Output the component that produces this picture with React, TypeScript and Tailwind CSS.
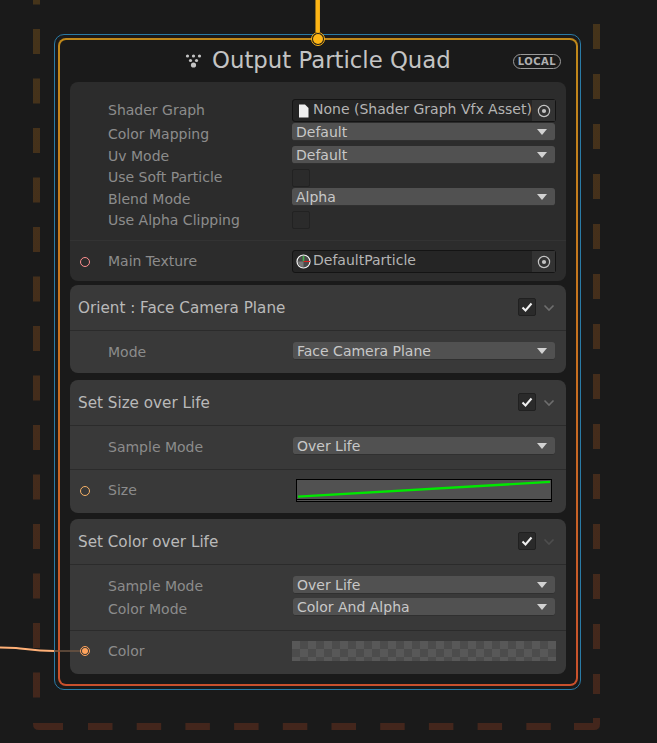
import React from "react";

const labelText = "text-[14px] leading-[18px] text-[#8c8c8c]";

function Caret() {
  return <span className="h-0 w-0 border-x-[5px] border-t-[6px] border-x-transparent border-t-[#d2d2d2]" />;
}

function Dropdown({ value, className = "" }: { value: string; className?: string }) {
  return (
    <div className={`flex h-[18px] items-center justify-between rounded-[3px] border-b border-[#303030] bg-[#515151] pl-[4px] pr-[8px] text-[14px] leading-[18px] text-[#c8c8c8] ${className}`}>
      <span>{value}</span>
      <Caret />
    </div>
  );
}

function Target() {
  return (
    <div className="flex h-full w-[23px] items-center justify-center bg-[#333333]">
      <svg width="14" height="14" viewBox="0 0 14 14">
        <circle cx="7" cy="7" r="5.6" fill="none" stroke="#c4c4c4" strokeWidth="1.2" />
        <circle cx="7" cy="7" r="2.1" fill="#c4c4c4" />
      </svg>
    </div>
  );
}

function ObjectField({ icon, value }: { icon: React.ReactNode; value: string }) {
  return (
    <div className="flex h-[23px] w-[264px] items-center rounded-[3px] border border-[#141414] bg-[#252525] text-[14px] text-[#b4b4b4]">
      <div className="flex w-[20px] shrink-0 justify-center">{icon}</div>
      <span className="flex-1 whitespace-nowrap pb-[2px]">{value}</span>
      <Target />
    </div>
  );
}

function CheckBox({ checked, className = "" }: { checked?: boolean; className?: string }) {
  return (
    <div className={`flex h-[18px] w-[18px] items-center justify-center rounded-[2px] ${checked ? "border border-[#202020] bg-[#2a2a2a]" : "border border-[#222222] bg-[#2b2b2b]"} ${className}`}>
      {checked && (
        <svg width="12" height="10" viewBox="0 0 12 10">
          <path d="M1.5 5.5 L4.5 8.5 L10.5 1.5" fill="none" stroke="#f0f0f0" strokeWidth="2" />
        </svg>
      )}
    </div>
  );
}

function Row({ label, children, className = "", labelClass = "" }: { label: string; children: React.ReactNode; className?: string; labelClass?: string }) {
  return (
    <div className={`flex items-center ${className}`}>
      <span className={`w-[222px] shrink-0 pl-[38px] ${labelText} ${labelClass}`}>{label}</span>
      {children}
    </div>
  );
}

function Port({ color, filled }: { color: string; filled?: boolean }) {
  return (
    <span className="absolute left-[10px] top-1/2 flex h-[10px] w-[10px] -translate-y-1/2 items-center justify-center rounded-full border" style={{ borderColor: color }}>
      {filled && <span className="h-[6px] w-[6px] rounded-full" style={{ backgroundColor: color }} />}
    </span>
  );
}

function BlockHeader({ title, dimChevron }: { title: string; dimChevron?: boolean }) {
  return (
    <div className="flex h-[46px] items-center border-b border-[#2b2b2b] pl-[8px] pr-[11px]">
      <span className="flex-1 translate-y-[1px] text-[15.2px] text-[#b9b9b9]">{title}</span>
      <CheckBox checked className="-translate-y-[1px]" />
      <svg className="ml-[7px]" width="12" height="8" viewBox="0 0 12 8">
        <path d="M1.5 1.5 L6 6 L10.5 1.5" fill="none" stroke={dimChevron ? "#4e4e4e" : "#6e6e6e"} strokeWidth="1.6" />
      </svg>
    </div>
  );
}

const blockClass = "overflow-hidden rounded-[8px] bg-[#393939]";

export default function App() {
  return (
    <div className="relative h-[743px] w-[657px] overflow-hidden bg-[#1a1a1a] pl-[54px] pt-[34px] font-['DejaVu_Sans',sans-serif]">
      {/* group frame */}
      <svg className="absolute left-0 top-0" width="657" height="743" fill="none" strokeWidth="7">
        <defs>
          <linearGradient id="frame" x1="0" y1="0" x2="0" y2="743" gradientUnits="userSpaceOnUse">
            <stop offset="0" stopColor="#45341a" />
            <stop offset="1" stopColor="#43261c" />
          </linearGradient>
        </defs>
        <path d="M36.5 -20.5 V698" stroke="url(#frame)" strokeDasharray="25 24.5" />
        <path d="M596.5 24 V694" stroke="url(#frame)" strokeDasharray="25 25" />
        <path d="M36.5 723 V724 Q36.5 726.5 39 726.5 H63" stroke="#43261c" />
        <path d="M88 726.5 H560" stroke="#43261c" strokeDasharray="24.5 24.2" />
        <path d="M574 726.5 H594 Q596.5 726.5 596.5 724 V718" stroke="#43261c" />
      </svg>

      <div className="relative h-[656px] w-[527px] rounded-[10px] border border-[#2a7ba6] pb-[3px] pl-[3px] pr-[2px] pt-[3px]">
        <div className="h-full rounded-[8px] bg-gradient-to-b from-[#c0891a] via-[#c8701f] to-[#c9502c] p-[2px]">
          <div className="h-full rounded-[6px] bg-[#1a1a1a] px-[10px] pt-[42px]">
            <div className="flex flex-col">
              {/* context settings */}
              <div className="h-[199px] overflow-hidden rounded-[8px] bg-[#2c2c2c] pt-[17px]">
                <Row label="Shader Graph" labelClass="-translate-y-[1px]">
                  <ObjectField
                    value="None (Shader Graph Vfx Asset)"
                    icon={
                      <svg width="11" height="14" viewBox="0 0 11 14">
                        <path d="M1 0.5 H7 L10.5 4 V13.5 H1 Z" fill="#f0f0f0" />
                      </svg>
                    }
                  />
                </Row>
                <Row label="Color Mapping" className="mt-[1px]" labelClass="translate-y-[2px]">
                  <Dropdown value="Default" className="w-[263px]" />
                </Row>
                <Row label="Uv Mode" className="mt-[5px]" labelClass="translate-y-[1px]">
                  <Dropdown value="Default" className="w-[263px]" />
                </Row>
                <Row label="Use Soft Particle" className="mt-[5px]" labelClass="-translate-y-[1px]">
                  <CheckBox />
                </Row>
                <Row label="Blend Mode" className="mt-[1px]" labelClass="translate-y-[2px]">
                  <Dropdown value="Alpha" className="w-[263px]" />
                </Row>
                <Row label="Use Alpha Clipping" className="mt-[5px]">
                  <CheckBox />
                </Row>
                <div className="relative mt-[11px] flex h-[42px] items-center border-t border-[#333333]">
                  <Port color="#ff8f8f" />
                  <Row label="Main Texture" labelClass="-translate-y-[1px]">
                    <ObjectField
                      value="DefaultParticle"
                      icon={
                        <svg width="15" height="15" viewBox="0 0 15 15">
                          <circle cx="7.5" cy="7.5" r="6.5" fill="#4a4a4a" stroke="#f4f4f4" strokeWidth="1.2" />
                          <path d="M7.5 7.5 V13 A5.5 5.5 0 0 1 2 7.5 Z" fill="#777777" />
                          <path d="M7.5 7.5 V2" stroke="#45b04a" strokeWidth="1.6" />
                          <path d="M7.5 7.5 H14" stroke="#e02020" strokeWidth="1" />
                        </svg>
                      }
                    />
                  </Row>
                </div>
              </div>

              {/* orient */}
              <div className={`mt-[4px] h-[88px] ${blockClass}`}>
                <BlockHeader title="Orient : Face Camera Plane" />
                <Row label="Mode" className="mt-[11px]" labelClass="translate-y-[1px]">
                  <Dropdown value="Face Camera Plane" className="ml-[1px] w-[262px]" />
                </Row>
              </div>

              {/* size over life */}
              <div className={`mt-[7px] h-[133px] ${blockClass}`}>
                <BlockHeader title="Set Size over Life" />
                <Row label="Sample Mode" className="mt-[11px]" labelClass="translate-y-[1px]">
                  <Dropdown value="Over Life" className="ml-[1px] w-[262px]" />
                </Row>
                <div className="relative mt-[14px] flex h-[42px] items-center border-t border-[#2b2b2b]">
                  <Port color="#f7b267" />
                  <Row label="Size" labelClass="-translate-y-[1px]">
                    <div className="ml-[4px] h-[23px] w-[256px] border border-black bg-[#515151]">
                      <svg width="254" height="20" viewBox="0 0 254 20" preserveAspectRatio="none" className="border-b border-black">
                        <path d="M1 17.5 L253 2" stroke="#00e800" strokeWidth="2.5" fill="none" />
                      </svg>
                    </div>
                  </Row>
                </div>
              </div>

              {/* color over life */}
              <div className={`mt-[6px] h-[155px] ${blockClass}`}>
                <BlockHeader title="Set Color over Life" dimChevron />
                <Row label="Sample Mode" className="mt-[11px]" labelClass="translate-y-[1px]">
                  <Dropdown value="Over Life" className="ml-[1px] w-[262px]" />
                </Row>
                <Row label="Color Mode" className="mt-[4px]" labelClass="translate-y-[2px]">
                  <Dropdown value="Color And Alpha" className="ml-[1px] w-[262px]" />
                </Row>
                <div className="relative mt-[14px] flex h-[41px] items-center border-t border-[#2b2b2b]">
                  <Port color="#ffa35c" filled />
                  <Row label="Color">
                    <div className="h-[20px] w-[264px] bg-[repeating-conic-gradient(#4c4c4c_0_25%,#585858_0_50%)] bg-[length:16px_16px]" />
                  </Row>
                </div>
              </div>
            </div>
          </div>
        </div>

        {/* title sits over the node frame */}
        <div className="absolute left-0 right-0 top-[9px] flex h-[34px] items-center">
          <svg className="absolute left-[130px]" width="17" height="16" viewBox="0 0 17 16" fill="#c4c4c4">
            <circle cx="2.5" cy="3" r="1.6" />
            <circle cx="8.5" cy="3" r="1.6" />
            <circle cx="14.5" cy="3" r="1.6" />
            <circle cx="5.5" cy="7.5" r="1.6" />
            <circle cx="11.5" cy="7.5" r="1.6" />
            <circle cx="8.5" cy="12" r="2.6" />
          </svg>
          <span className="absolute left-[157px] -translate-y-[1px] whitespace-nowrap text-[22.8px] text-[#c4c4c4]">Output Particle Quad</span>
          <span className="absolute left-[458px] flex h-[15px] w-[48px] items-center justify-center rounded-full border border-[#9a9a9a] text-[10px] font-bold tracking-[0.5px] text-[#b0b0b0]">LOCAL</span>
        </div>

        {/* flow anchor */}
        <span className="absolute left-[256px] top-[-3px] z-10 flex h-[14px] w-[14px] items-center justify-center rounded-full border border-[#fdb515] bg-[#1a1a1a]">
          <span className="h-[10px] w-[10px] rounded-full bg-[#fdb515]" />
        </span>
      </div>

      {/* wires */}
      <svg className="absolute left-0 top-0" width="657" height="743" fill="none">
        <path d="M317.7 0 V32" stroke="#fdb515" strokeWidth="4.5" />
        <path d="M0 647.5 L16 648 C30 649.5 36 651 54 651" stroke="#ffb077" strokeWidth="2" />
        <path d="M54 651 H59" stroke="#8a6246" strokeWidth="1.5" />
        <path d="M59 651 H80" stroke="#6e5442" strokeWidth="1.5" />
      </svg>
    </div>
  );
}
